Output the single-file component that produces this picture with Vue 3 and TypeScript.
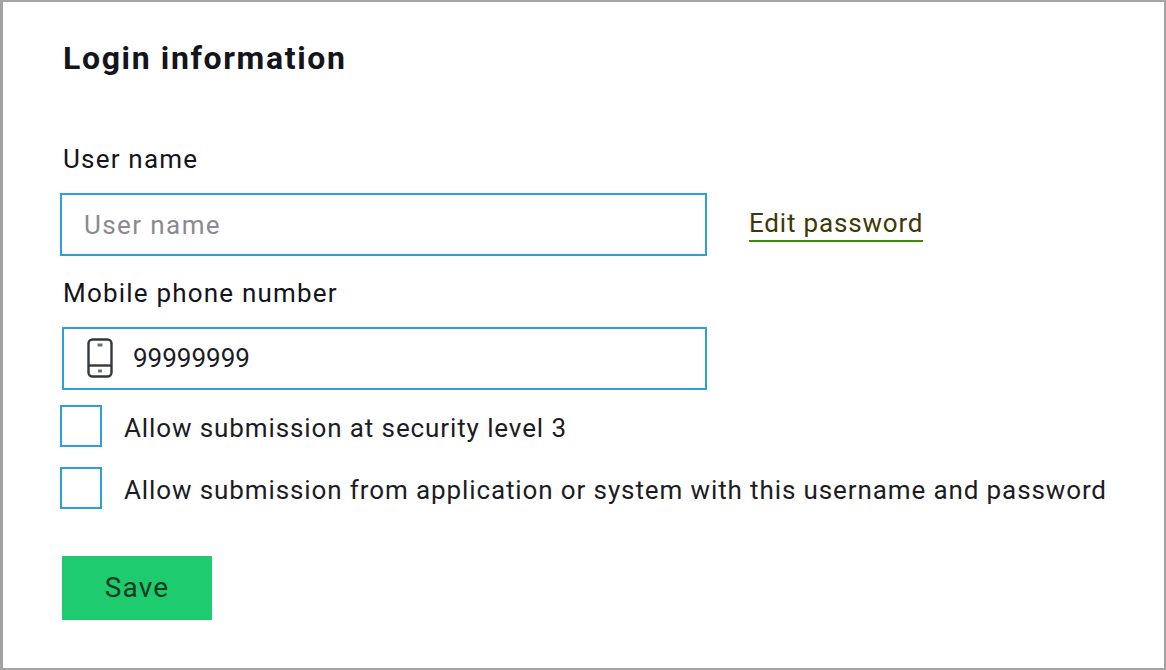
<script setup lang="ts">
const checks: string[] = [
  'Allow submission at security level 3',
  'Allow submission from application or system with this username and password',
]
</script>

<template>
  <main class="frame">
    <h1 class="title">Login information</h1>
    <label class="label first" for="user">User name</label>
    <div class="row">
      <input id="user" class="field user" placeholder="User name" />
      <a class="edit" href="#">Edit password</a>
    </div>
    <label class="label second">Mobile phone number</label>
    <div class="field phone">
      <svg class="icon" width="26" height="40" viewBox="0 0 26 40" fill="none" stroke="#33383e" stroke-width="2.4">
        <rect x="1.5" y="1.5" width="23" height="37" rx="4" />
        <path d="M1.5 27.5h23" />
        <path d="M10.5 7h5" stroke="#6f7378" stroke-width="3" />
        <path d="M11 33h4" stroke="#6f7378" stroke-width="3" />
      </svg>
      <span class="value">99999999</span>
    </div>
    <div v-for="c in checks" :key="c" class="check">
      <span class="box"></span>
      <span class="check-text">{{ c }}</span>
    </div>
    <button class="save" type="button">Save</button>
  </main>
</template>

<style>
html, body { margin: 0; background: #fff; }
</style>

<style scoped>
.frame {
  box-sizing: border-box;
  width: 1166px;
  height: 670px;
  border: solid #a3a3a3;
  border-width: 2px 2px 2px 3px;
  padding: 0 0 0 57px;
  display: flex;
  flex-direction: column;
  align-items: flex-start;
  font-family: Roboto, "Noto Sans", sans-serif;
  color: #1c1c24;
  background: #fff;
}
.title {
  margin: 37px 0 0 3px;
  font-size: 32px;
  line-height: 38px;
  font-weight: 700;
  letter-spacing: 1.63px;
  color: #14141c;
}
.label {
  font-size: 26px;
  line-height: 32px;
  margin-left: 3px;
  letter-spacing: 1.2px;
  color: #14141c;
}
.first { margin-top: 66px; }
.second { margin-top: 21px; }
.row {
  display: flex;
  align-items: center;
  margin-top: 18px;
}
.field {
  box-sizing: border-box;
  height: 63px;
  width: 647px;
  border: 2px solid #2d9fd9;
  background: #fff;
  outline: none;
  border-radius: 0;
  font-family: inherit;
  font-size: 26px;
  letter-spacing: 1.4px;
}
.user { padding: 0 0 0 22px; color: #1c1c24; }
.user::placeholder { color: #8a8a90; opacity: 1; }
.edit {
  margin-left: 42px;
  color: #3f3806;
  font-size: 26px;
  line-height: 34px;
  letter-spacing: 0.82px;
  text-decoration: none;
  border-bottom: 2px solid #3f8a0c;
  position: relative;
  top: -1px;
}
.phone {
  margin: 18px 0 0 2px;
  width: 645px;
  display: flex;
  align-items: center;
  padding-left: 23px;
}
.value { margin-left: 20px; font-size: 26px; letter-spacing: 0; margin-bottom: 2px; }
.icon { display: block; margin-bottom: 2px; }
.check {
  display: flex;
  align-items: center;
  height: 42px;
}
.phone + .check { margin-top: 15px; }
.check + .check { margin-top: 20px; }
.box {
  box-sizing: border-box;
  width: 42px;
  height: 42px;
  border: 2px solid #2d9fd9;
  background: #fff;
}
.check-text {
  margin-left: 22px;
  font-size: 26px;
  letter-spacing: 0.89px;
  white-space: nowrap;
  padding-top: 4px;
}
.save {
  margin: 47px 0 0 2px;
  width: 150px;
  height: 64px;
  border: 0;
  background: #1ecb6e;
  color: #0e3a22;
  font-family: inherit;
  font-size: 28px;
  letter-spacing: 1.1px;
  padding: 0 0 2px;
}
</style>
